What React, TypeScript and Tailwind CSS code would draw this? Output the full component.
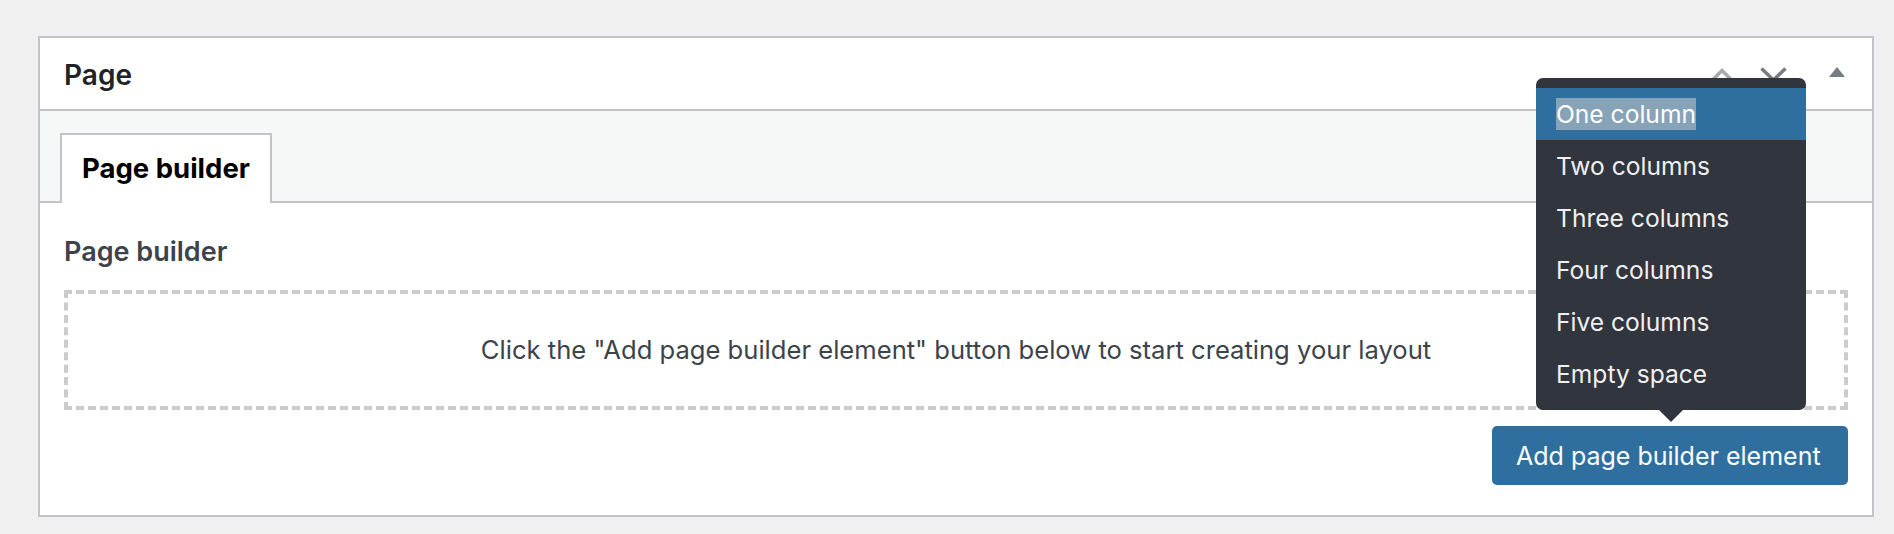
import React from "react";

const items = ["One column", "Two columns", "Three columns", "Four columns", "Five columns", "Empty space"];

export default function App() {
  return (
    <div
      className="min-h-[534px] w-full bg-[#f0f0f1] pt-[36px] pl-[38px] pr-[20px]"
      style={{ fontFamily: "Inter, 'Noto Sans', 'Liberation Sans', sans-serif" }}
    >
      <div className="border-2 border-[#c3c4c7] bg-white">
        {/* Header */}
        <div className="flex h-[73px] items-center border-b-2 border-[#c3c4c7] pl-[24px]">
          <h2 className="flex-1 pt-[3px] text-[28px] font-semibold leading-[39px] text-[#1d2327]">Page</h2>
          <div className="flex items-center">
            <svg width="22" height="14" viewBox="0 0 22 14" className="mt-[2px]">
              <polyline points="1.5,12 11,2.5 20.5,12" fill="none" stroke="#a7aaad" strokeWidth="3.5" />
            </svg>
            <svg width="27" height="15" viewBox="0 0 27 15" className="ml-[27px] mt-[2px]">
              <polyline points="1.5,1.5 13.5,13 25.5,1.5" fill="none" stroke="#787c82" strokeWidth="3.5" />
            </svg>
            <svg width="16" height="10" viewBox="0 0 16 10" className="ml-[42px] mr-[27px] mb-[3px]">
              <polygon points="8,0 16,10 0,10" fill="#787c82" />
            </svg>
          </div>
        </div>

        {/* Tabs */}
        <div className="flex border-b-2 border-[#c3c4c7] bg-[#f6f7f7] pl-[20px] pt-[22px]">
          <div className="-mb-[2px] h-[70px] w-[212px] border-2 border-b-0 border-[#c3c4c7] bg-white pl-[20px] pt-[14px] text-[27.5px] font-bold leading-[38px] text-black">
            Page builder
          </div>
        </div>

        {/* Content */}
        <div className="px-[24px] pt-[32px] pb-[30px]">
          <div className="text-[27px] font-semibold leading-[34px] text-[#3c434a]">Page builder</div>
          <div className="mt-[21px] flex h-[120px] items-center justify-center border-4 border-dashed border-[#cccccc] text-[25.6px] leading-[32px] text-[#3c434a]">
            Click the "Add page builder element" button below to start creating your layout
          </div>
          <div className="mt-[16px] flex justify-end">
            <div className="relative">
              <button className="h-[59px] w-[356px] rounded-[5px] bg-[#2f6f9f] pl-[24px] text-left text-[25px] leading-[32px] text-white">
                Add page builder element
              </button>
              <div className="absolute bottom-[calc(100%+16px)] left-[44px] z-10 w-[270px] rounded-[7px] bg-[#31353d] py-[10px]">
                {items.map((it, i) => (
                  <div
                    key={it}
                    className={
                      "flex h-[52px] items-center pl-[20px] text-[24.6px] leading-[32px] text-[#f0f0f1] " +
                      (i === 0 ? "bg-[#2f6f9f]" : "")
                    }
                  >
                    <span className={i === 0 ? "bg-[#87a3b8] text-white" : ""}>{it}</span>
                  </div>
                ))}
                <div className="absolute left-1/2 top-full h-0 w-0 -translate-x-1/2 border-x-[12px] border-t-[12px] border-x-transparent border-t-[#31353d]" />
              </div>
            </div>
          </div>
        </div>
      </div>
    </div>
  );
}
